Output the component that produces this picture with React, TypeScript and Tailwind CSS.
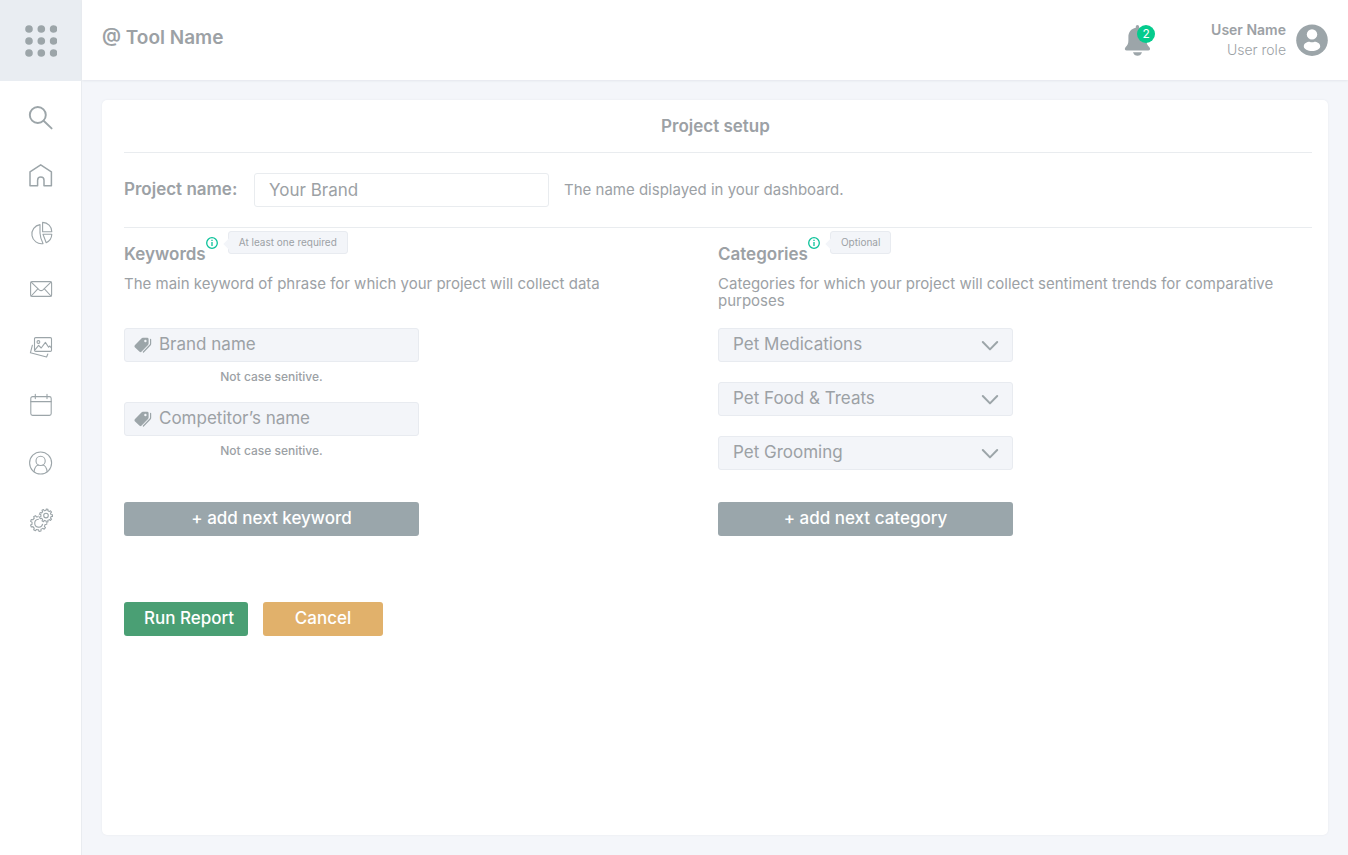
import type { ReactNode } from "react";

function gearPath(cx: number, cy: number, outer: number, inner: number, teeth: number): string {
  const step = (Math.PI * 2) / teeth;
  const at = (r: number, a: number) =>
    `${(cx + r * Math.cos(a)).toFixed(2)} ${(cy + r * Math.sin(a)).toFixed(2)}`;
  let d = "";
  for (let i = 0; i < teeth; i++) {
    const a = i * step;
    d += `${i === 0 ? "M" : "L"}${at(inner, a - step * 0.28)}L${at(outer, a - step * 0.18)}`;
    d += `L${at(outer, a + step * 0.18)}L${at(inner, a + step * 0.28)}`;
    d += `A${inner} ${inner} 0 0 1 ${at(inner, a + step * 0.72)}`;
  }
  return d + "Z";
}

const navItems: { label: string; icon: ReactNode }[] = [
  {
    label: "Search",
    icon: (
      <g strokeWidth="1.9">
        <circle cx="9.8" cy="9" r="8" />
        <path d="M15.6 14.8l8 7.6" />
      </g>
    ),
  },
  {
    label: "Home",
    icon: <path strokeWidth="1.5" d="M2 8.8 12.7 1.8 23.4 8.8V22.8H16V17.2a3.2 3.2 0 0 0-6.4 0v5.6H2Z" />,
  },
  {
    label: "Analytics",
    icon: (
      <>
        <path d="M12 3.6A9.6 9.6 0 1 0 15 22.6Q12.2 17 12 12Z" />
        <path d="M14.6 1.4V10.8H23.8A9.3 9.3 0 0 0 14.6 1.4Z" />
        <path d="M15 13.3H23.8A9.8 9.8 0 0 1 18.2 21.8Z" />
      </>
    ),
  },
  {
    label: "Mail",
    icon: (
      <>
        <rect x="2.6" y="3.6" width="21" height="14.8" rx="1.5" />
        <path d="M3.2 4.2l8 7.6q1.9 1.6 3.8 0l8-7.6M3.2 18l6.6-7.2M23 18l-6.6-7.2" />
      </>
    ),
  },
  {
    label: "Gallery",
    icon: (
      <>
        <rect x="6.5" y="1.6" width="17" height="13.8" rx="1.2" />
        <circle cx="10.4" cy="6" r="1.4" />
        <path d="M7 13.8l3.6-4.4 2.6 2.6 4.2-5.6 3.2 4.8 1.2-1.2 1.5 1.8" />
        <path d="M4.4 9.2L2.4 16.8l16.2 4.2 1.2-3" />
      </>
    ),
  },
  {
    label: "Calendar",
    icon: (
      <>
        <rect x="2.8" y="3.6" width="20.4" height="18.8" rx="1.8" />
        <path d="M2.8 8.6h20.4M7.3 1.2v4.4M19 1.2v4.4" />
      </>
    ),
  },
  {
    label: "Account",
    icon: (
      <>
        <circle cx="12.6" cy="12" r="11" />
        <circle cx="12.6" cy="9.9" r="4.6" />
        <path d="M6 20.6c.6-3.8 2.4-6.2 4.4-6.6M19.2 20.6c-.6-3.8-2.4-6.2-4.4-6.6" />
      </>
    ),
  },
  {
    label: "Settings",
    icon: (
      <>
        <path d={gearPath(10.6, 15.2, 8.2, 6.6, 9)} />
        <path d="M10.4 11.2a4 4 0 1 0 4.2 5" />
        <circle cx="18" cy="7.6" r="7.6" fill="#fff" stroke="none" />
        <path d={gearPath(18, 7.6, 6.6, 5.1, 9)} />
        <circle cx="18" cy="7.6" r="2.3" />
      </>
    ),
  },
];

function GridIcon() {
  return (
    <svg className="h-8 w-8" viewBox="0 0 32 32" fill="#9ca5a9" aria-hidden="true">
      {[4, 16, 28].map((y) => [4, 16.3, 28.6].map((x) => <circle key={`${x}-${y}`} cx={x} cy={y} r="3.8" />))}
    </svg>
  );
}

function TagsIcon() {
  return (
    <svg className="h-4 w-[18px] shrink-0" viewBox="0 0 18 16" aria-hidden="true">
      <path
        fill="#9ca5a9"
        fillRule="evenodd"
        d="M.8 8.3 7.4 1.4Q8 .8 8.8.8h4.4q1.4 0 1.4 1.4v4.3q0 .8-.6 1.4L7.4 14.8q-.9.8-1.8 0L.8 10.2q-.8-.9 0-1.9ZM11.4 2.8a1.2 1.2 0 1 0 0 2.4 1.2 1.2 0 0 0 0-2.4Z"
      />
      <path fill="none" stroke="#9ca5a9" strokeWidth="1.2" strokeLinecap="round" d="M16.6 2.4v4.4q0 .7-.5 1.2L9.4 15" />
    </svg>
  );
}

function InfoIcon() {
  return (
    <svg className="h-3 w-3" viewBox="0 0 12 12" fill="none" stroke="#0cc29a" strokeWidth="1.3" aria-hidden="true">
      <circle cx="6" cy="6" r="5.3" />
      <path d="M6 5v4M6 2.8v1.2" />
    </svg>
  );
}

function SectionHeading({ title, note }: { title: string; note: string }) {
  return (
    <div className="flex items-start">
      <h3 className="mt-3.5 mb-px text-[17px] leading-6 font-semibold">{title}</h3>
      <span className="mt-[9px] shrink-0">
        <InfoIcon />
      </span>
      <span className="relative mt-[3px] ml-2.5 rounded-[3px] border border-[#e8ebf0] bg-[#f3f5f9] px-2.5 text-[10px] leading-[21px]">
        <span className="absolute top-2 -left-1 size-2 rotate-45 bg-[#f3f5f9]" />
        <span className="relative">{note}</span>
      </span>
    </div>
  );
}

function KeywordField({ id, label }: { id: string; label: string }) {
  return (
    <div className="max-w-[295px]">
      <div className="flex h-[34px] items-center gap-[7px] rounded-[3px] border border-[#e8ebf0] bg-[#f3f5f9] px-[9px]">
        <TagsIcon />
        <input
          id={id}
          aria-label={label}
          aria-describedby={`${id}-hint`}
          placeholder={label}
          className="min-w-0 flex-1 bg-transparent text-[17px] outline-none placeholder:text-[#9ca1a5]"
        />
      </div>
      <p id={`${id}-hint`} className="mt-1.5 mb-4 text-center text-xs leading-[18px] font-medium">
        Not case senitive.
      </p>
    </div>
  );
}

const categories = ["Pet Medications", "Pet Food & Treats", "Pet Grooming"];

function CategorySelect({ value, index }: { value: string; index: number }) {
  return (
    <div className="relative max-w-[295px]">
      <select
        aria-label={`Category ${index + 1}`}
        defaultValue={value}
        className="h-[34px] w-full appearance-none rounded-[3px] border border-[#e8ebf0] bg-[#f3f5f9] px-3.5 text-[17px] outline-none"
      >
        {categories.map((c) => (
          <option key={c}>{c}</option>
        ))}
      </select>
      <svg
        className="pointer-events-none absolute top-3 right-3.5 h-3 w-[18px]"
        viewBox="0 0 18 12"
        fill="none"
        stroke="#9ca5a9"
        strokeWidth="2"
        strokeLinecap="round"
        strokeLinejoin="round"
        aria-hidden="true"
      >
        <path d="M1.8 2 9 9.4 16.2 2" />
      </svg>
    </div>
  );
}

export default function App() {
  return (
    <div className="flex min-h-screen bg-[#f4f6fa] font-['Inter','Liberation_Sans',sans-serif] text-[#9ca1a5]">
      <aside className="flex w-[82px] shrink-0 flex-col border-r border-[#e9ecf0] bg-white">
        <button type="button" aria-label="All tools" className="flex h-[81px] items-center justify-center bg-[#e9edf2]">
          <GridIcon />
        </button>
        <nav className="flex h-[452px] flex-col items-center justify-between pt-[25px]">
          {navItems.map(({ label, icon }) => (
            <a key={label} href="#" aria-label={label} className="block size-[25px]">
              <svg
                className="size-[25px]"
                viewBox="0 0 25 25"
                fill="none"
                stroke="#9ca5a9"
                strokeWidth="1.1"
                strokeLinecap="round"
                strokeLinejoin="round"
                aria-hidden="true"
              >
                {icon}
              </svg>
            </a>
          ))}
        </nav>
      </aside>

      <div className="flex min-w-0 flex-1 flex-col">
        <header className="flex h-20 items-center justify-between bg-white px-5 shadow-[0_1px_2px_#e4e7ec]">
          <h1 className="pb-1 text-[19px] leading-7 font-semibold">@ Tool Name</h1>
          <div className="flex items-center">
            <button type="button" aria-label="Notifications, 2 unread" className="relative mr-[55px] h-8 w-8">
              <svg className="h-8 w-8" viewBox="0 0 32 32" fill="#9ca5a9" aria-hidden="true">
                <path d="M13.4 1q1.7 0 1.7 1.6v1.2c4.8.9 7.4 4.6 7.4 9.2v3.2c0 3.2.8 4.8 2.9 7 1.3 1.5.6 3.4-1.3 3.4H2.8c-1.9 0-2.6-1.9-1.3-3.4 2.1-2.2 2.9-3.8 2.9-7V13c0-4.6 2.6-8.3 7.4-9.2V2.6q0-1.6 1.6-1.6Z" />
                <path d="M9 28.3h9q-1.2 3.5-4.5 3.5T9 28.3Z" />
              </svg>
              <span className="absolute top-px left-[13px] flex h-[18px] w-[18px] items-center justify-center rounded-full bg-[#05cb8d] text-xs leading-none text-white">
                2
              </span>
            </button>
            <div className="mr-2.5 text-right text-sm leading-5">
              <p className="font-semibold">User Name</p>
              <p className="font-light">User role</p>
            </div>
            <svg className="h-8 w-8" viewBox="0 0 32 32" role="img" aria-label="User avatar">
              <circle cx="16" cy="16.2" r="15.8" fill="#9ca5a9" />
              <circle cx="16" cy="10.4" r="5.2" fill="#fff" />
              <path
                fill="#fff"
                d="M7.8 22.4c0-3.2 3.2-4.7 5.7-4.7q2.5 1 5 0c2.5 0 5.7 1.5 5.7 4.7 0 2.7-4.2 4.5-8.2 4.5s-8.2-1.8-8.2-4.5Z"
              />
            </svg>
          </div>
        </header>

        <main className="flex flex-1 flex-col p-5">
          <section className="flex-1 rounded-[5px] bg-white pr-4 pl-[22px] shadow-[0_0_2px_#e4e7ec]">
            <h2 className="border-b border-[#e9ecef] pr-[5px] text-center text-[17px] leading-[52px] font-semibold">
              Project setup
            </h2>

            <form onSubmit={(e) => e.preventDefault()}>
              <div className="flex items-center border-b border-[#e9ecef] py-5">
                <label htmlFor="project-name" className="w-[130px] shrink-0 text-[17px] font-semibold">
                  Project name:
                </label>
                <input
                  id="project-name"
                  placeholder="Your Brand"
                  aria-describedby="project-help"
                  className="h-[34px] w-[295px] rounded-[3px] border border-[#e9ecef] px-3.5 text-[17px] outline-none placeholder:text-[#9ca1a5]"
                />
                <p id="project-help" className="ml-[15px] text-[15px]">
                  The name displayed in your dashboard.
                </p>
              </div>

              <div className="grid grid-cols-2">
                <section>
                  <SectionHeading title="Keywords" note="At least one required" />
                  <p className="mt-2 mb-[19px] min-h-[34px] text-[15px] leading-[17px]">
                    The main keyword of phrase for which your project will collect data
                  </p>
                  <KeywordField id="brand" label="Brand name" />
                  <KeywordField id="competitor" label="Competitor’s name" />
                  <button
                    type="button"
                    className="mt-[26px] h-[34px] w-[295px] rounded-[3px] bg-[#9aa6ab] text-[17px] font-medium text-white"
                  >
                    + add next keyword
                  </button>
                </section>

                <section>
                  <SectionHeading title="Categories" note="Optional" />
                  <p className="mt-2 mb-[19px] min-h-[34px] text-[15px] leading-[17px]">
                    Categories for which your project will collect sentiment trends for comparative purposes
                  </p>
                  <div className="flex flex-col gap-5">
                    {categories.map((c, i) => (
                      <CategorySelect key={c} value={c} index={i} />
                    ))}
                  </div>
                  <button
                    type="button"
                    className="mt-8 h-[34px] w-[295px] rounded-[3px] bg-[#9aa6ab] text-[17px] font-medium text-white"
                  >
                    + add next category
                  </button>
                </section>
              </div>

              <div className="mt-[66px] flex gap-[15px]">
                <button
                  type="submit"
                  className="h-[34px] w-[124px] rounded-[3px] bg-[#4a9f74] pl-1.5 text-[17px] font-medium text-white"
                >
                  Run Report
                </button>
                <button
                  type="button"
                  className="h-[34px] w-[120px] rounded-[3px] bg-[#e1b16b] text-[17px] font-medium text-white"
                >
                  Cancel
                </button>
              </div>
            </form>
          </section>
        </main>
      </div>
    </div>
  );
}
